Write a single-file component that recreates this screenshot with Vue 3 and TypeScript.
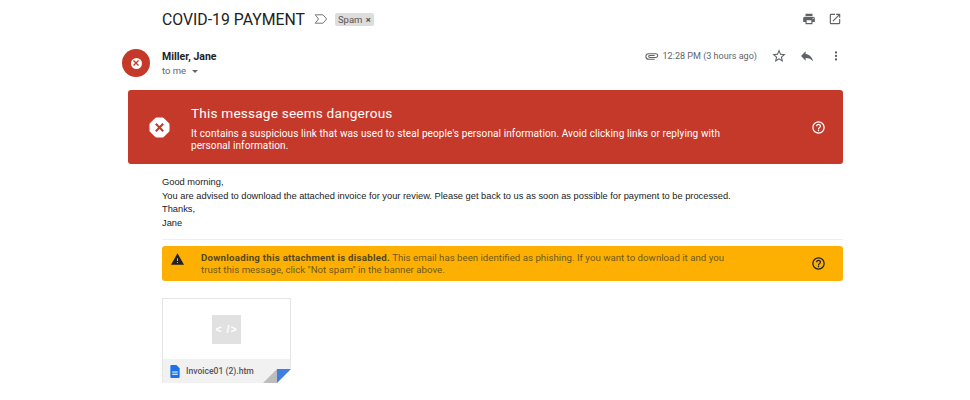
<script setup lang="ts">
const bodyLines = [
  'Good morning,',
  'You are advised to download the attached invoice for your review. Please get back to us as soon as possible for payment to be processed.',
  'Thanks,',
  'Jane'
]
</script>

<template>
  <div class="mail">
    <header class="subject-row">
      <h1 class="subject">COVID-19 PAYMENT</h1>
      <svg class="label-mark" width="14" height="10" viewBox="0 0 14 10" fill="none" stroke="#777" stroke-width="1">
        <path d="M1.2 .8H9L12.6 5 9 9.2H1.2L4.6 5Z" />
      </svg>
      <span class="chip">Spam <span class="chip-x">×</span></span>
      <div class="subject-actions">
        <svg width="14" height="14" viewBox="0 0 24 24" fill="#5f6368">
          <path d="M19 8H5c-1.66 0-3 1.34-3 3v6h4v4h12v-4h4v-6c0-1.66-1.34-3-3-3zm-3 11H8v-5h8v5zm3-7c-.55 0-1-.45-1-1s.45-1 1-1 1 .45 1 1-.45 1-1 1zm-1-9H6v4h12V3z" />
        </svg>
        <svg width="14" height="14" viewBox="0 0 24 24" fill="#5f6368">
          <path d="M19 19H5V5h7V3H5a2 2 0 0 0-2 2v14a2 2 0 0 0 2 2h14c1.100 0 2-.9 2-2v-7h-2v7zM14 3v2h3.590l-9.830 9.830 1.410 1.410L19 6.410V10h2V3h-7z" />
        </svg>
      </div>
    </header>

    <div class="sender-row">
      <div class="avatar">
        <span class="avatar-dot">
          <svg width="8" height="8" viewBox="0 0 8 8" stroke="#c5392a" stroke-width="1.4"><path d="M1.500 1.500l5 5M6.500 1.500l-5 5" /></svg>
        </span>
      </div>
      <div class="sender">
        <div class="sender-name">Miller, Jane</div>
        <div class="sender-to">to me <span class="caret"></span></div>
      </div>
      <div class="meta">
        <svg width="15" height="15" viewBox="0 0 24 24" fill="none" stroke="#5f6368" stroke-width="1.7">
          <path d="M17 16.500H7.500a4.500 4.500 0 0 1 0-9H19a3 3 0 0 1 0 6H9a1.500 1.500 0 0 1 0-3h8" />
        </svg>
        <span class="time">12:28 PM (3 hours ago)</span>
        <svg class="meta-star" width="16" height="16" viewBox="0 0 24 24" fill="#5f6368">
          <path d="M22 9.240l-7.190-.62L12 2 9.190 8.630 2 9.240l5.460 4.730L5.820 21 12 17.270 18.180 21l-1.630-7.030L22 9.240zM12 15.400l-3.760 2.270 1-4.280-3.320-2.880 4.380-.38L12 6.100l1.710 4.040 4.380.38-3.320 2.880 1 4.280L12 15.400z" />
        </svg>
        <svg class="meta-reply" width="16" height="16" viewBox="0 0 24 24" fill="#5f6368">
          <path d="M10 9V5l-7 7 7 7v-4.100c5 0 8.500 1.600 11 5.100-1-5-4-10-11-11z" />
        </svg>
        <svg class="meta-more" width="14" height="14" viewBox="0 0 24 24" fill="#5f6368">
          <path d="M12 8a2 2 0 1 0 0-4 2 2 0 0 0 0 4zm0 2a2 2 0 1 0 0 4 2 2 0 0 0 0-4zm0 6a2 2 0 1 0 0 4 2 2 0 0 0 0-4z" />
        </svg>
      </div>
    </div>

    <section class="danger">
      <svg class="danger-icon" width="21" height="21" viewBox="0 0 21 21">
        <path fill="#fff" stroke="#fff" stroke-width="3" stroke-linejoin="round" d="M7.300 2h6.400l5.300 5.300v6.400L13.700 19H7.300L2 13.700V7.300z" />
        <path d="M6.800 6.800l7.400 7.400M14.200 6.800l-7.400 7.400" stroke="#c5392a" stroke-width="2" />
      </svg>
      <div class="danger-text">
        <h2>This message seems dangerous</h2>
        <p>It contains a suspicious link that was used to steal people's personal information. Avoid clicking links or replying with personal information.</p>
      </div>
      <svg class="help" width="15" height="15" viewBox="0 0 24 24" fill="#fff">
        <path d="M11 18h2v-2h-2v2zm1-16a10 10 0 1 0 0 20 10 10 0 0 0 0-20zm0 18a8 8 0 1 1 0-16 8 8 0 0 1 0 16zm0-14a4 4 0 0 0-4 4h2a2 2 0 1 1 4 0c0 2-3 1.750-3 5h2c0-2.250 3-2.500 3-5a4 4 0 0 0-4-4z" />
      </svg>
    </section>

    <div class="body-text">
      <div v-for="line in bodyLines" :key="line">{{ line }}</div>
    </div>
    <div class="divider"></div>

    <section class="warning">
      <svg class="warning-icon" width="13" height="12" viewBox="0 0 24 21" fill="#202124">
        <path d="M0 21h24L12 0 0 21zm13-3h-2v-2h2v2zm0-4h-2V9h2v5z" />
      </svg>
      <p class="warning-text"><strong>Downloading this attachment is disabled.</strong> This email has been identified as phishing. If you want to download it and you trust this message, click "Not spam" in the banner above.</p>
      <svg class="help" width="15" height="15" viewBox="0 0 24 24" fill="#202124">
        <path d="M11 18h2v-2h-2v2zm1-16a10 10 0 1 0 0 20 10 10 0 0 0 0-20zm0 18a8 8 0 1 1 0-16 8 8 0 0 1 0 16zm0-14a4 4 0 0 0-4 4h2a2 2 0 1 1 4 0c0 2-3 1.750-3 5h2c0-2.250 3-2.500 3-5a4 4 0 0 0-4-4z" />
      </svg>
    </section>

    <div class="attachment">
      <div class="preview">
        <div class="code-tile">&lt; /&gt;</div>
      </div>
      <div class="file-row">
        <svg width="12" height="13" viewBox="0 0 12 14">
          <path fill="#1a73e8" d="M2 0h5.500L11 3.500V13a1 1 0 0 1-1 1H2a1 1 0 0 1-1-1V1a1 1 0 0 1 1-1z" />
          <path fill="#fff" d="M3 7h6v1H3zM3 9.500h6v1H3z" />
        </svg>
        <span class="file-name">Invoice01 (2).htm</span>
        <span class="fold">
          <svg width="28" height="15" viewBox="0 0 28 15">
            <path fill="#fff" d="M14 15L28 0v15z" />
            <path fill="#bdbdbd" d="M0 15L14 1v14z" />
            <path fill="#3f7fe0" d="M14 1h14L14 15z" />
          </svg>
        </span>
      </div>
    </div>
  </div>
</template>

<style scoped>
.mail {
  width: 970px;
  height: 400px;
  overflow: hidden;
  background: #fff;
  font-family: Roboto, "Liberation Sans", sans-serif;
  color: #202124;
  box-sizing: border-box;
  padding: 0 127px 0 128px;
}

.subject-row {
  display: flex;
  align-items: center;
  height: 38px;
  padding-left: 34px;
}

.subject {
  margin: 0;
  font-size: 15.800px;
  font-weight: 400;
  color: #222;
}

.label-mark {
  margin-left: 9px;
}

.chip {
  margin-left: 7px;
  background: #dddddd;
  border-radius: 2px;
  padding: 1px 3px;
  font-size: 9.500px;
  line-height: 11px;
  color: #555;
}

.chip-x {
  font-weight: 700;
  margin-left: 1px;
}

.subject-actions {
  margin-left: auto;
  display: flex;
  gap: 12px;
  padding-right: 1px;
}

.sender-row {
  display: flex;
  align-items: flex-start;
  height: 52px;
}

.avatar {
  width: 28px;
  height: 28px;
  margin: 11px 0 0 -6px;
  border-radius: 50%;
  background: #c5392a;
  display: flex;
  align-items: center;
  justify-content: center;
}

.avatar-dot {
  width: 11px;
  height: 11px;
  border-radius: 50%;
  background: #fff;
  display: flex;
  align-items: center;
  justify-content: center;
}

.sender {
  margin-left: 12px;
  padding-top: 12px;
}

.sender-name {
  font-size: 10.500px;
  line-height: 13px;
  font-weight: 700;
  color: #222;
}

.sender-to {
  margin-top: 2px;
  font-size: 9.500px;
  line-height: 12px;
  color: #666;
}

.caret {
  display: inline-block;
  margin-left: 3px;
  vertical-align: middle;
  border: 3px solid transparent;
  border-top-color: #666;
  border-bottom-width: 0;
}

.meta {
  margin-left: auto;
  display: flex;
  align-items: center;
  height: 16px;
  margin-top: 10px;
}

.time {
  margin-left: 4px;
  font-size: 9.050px;
  color: #5f6368;
}

.meta-star {
  margin-left: 14px;
}

.meta-reply {
  margin-left: 12px;
}

.meta-more {
  margin-left: 14px;
}

.danger {
  display: flex;
  align-items: center;
  height: 74px;
  box-sizing: border-box;
  border-radius: 3px;
  background: #c5392a;
  color: #fff;
  padding-left: 21px;
  padding-right: 17px;
}

.danger-icon {
  flex: none;
}

.danger-text {
  margin-left: 21px;
  margin-top: 2px;
  width: 545px;
}

.danger-text h2 {
  margin: 0;
  font-size: 13.600px;
  line-height: 18px;
  font-weight: 400;
  letter-spacing: .2px;
}

.danger-text p {
  margin: 6px 0 0;
  font-size: 10px;
  line-height: 12px;
  letter-spacing: .1px;
}

.help {
  margin-left: auto;
  flex: none;
}

.body-text {
  margin: 12px 0 0 34px;
  font-family: "Liberation Sans", Arial, sans-serif;
  font-size: 9.300px;
  line-height: 13.600px;
  color: #222;
}

.divider {
  margin: 9px 0 0 34px;
  height: 1px;
  background: #eee;
}

.warning {
  display: flex;
  align-items: center;
  margin: 6px 0 0 34px;
  height: 35px;
  box-sizing: border-box;
  border-radius: 3px;
  background: #fdb001;
  padding-left: 9px;
  padding-right: 17px;
}

.warning-icon {
  flex: none;
  align-self: flex-start;
  margin-top: 7px;
}

.warning-text {
  margin: 0 0 0 17px;
  width: 530px;
  font-size: 9.700px;
  line-height: 12px;
  color: #6d5a20;
}

.warning-text strong {
  color: #54471f;
  letter-spacing: .24px;
}

.attachment {
  margin: 17px 0 0 34px;
  width: 129px;
  height: 85px;
  box-sizing: border-box;
  border: 1px solid #e6e6e6;
  border-bottom: 0;
  display: flex;
  flex-direction: column;
}

.preview {
  flex: 1;
  display: flex;
  align-items: center;
  justify-content: center;
}

.code-tile {
  width: 29px;
  height: 29px;
  background: #e1e1e1;
  color: #fff;
  font-family: "Liberation Sans", Arial, sans-serif;
  font-size: 10.500px;
  font-weight: 700;
  letter-spacing: 1px;
  display: flex;
  align-items: center;
  justify-content: center;
}

.file-row {
  position: relative;
  height: 24px;
  background: #f1f1f1;
  display: flex;
  align-items: center;
  padding-left: 6px;
}

.file-name {
  margin-left: 5px;
  font-size: 8.600px;
  font-weight: 500;
  color: #555;
}

.fold {
  position: absolute;
  right: -1px;
  bottom: 0;
  height: 15px;
  line-height: 0;
}
</style>

<style>
html,
body {
  margin: 0;
  background: #fff;
}
</style>
